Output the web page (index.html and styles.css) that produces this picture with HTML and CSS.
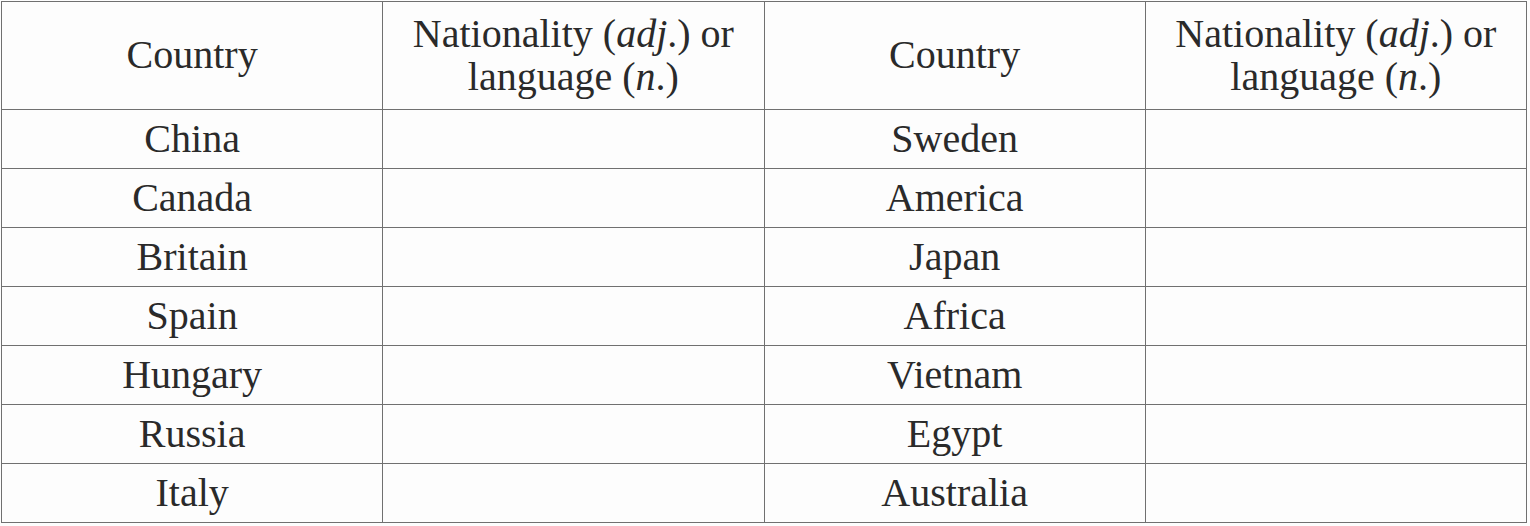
FILE: index.html
```html
<!DOCTYPE html>
<html>
<head>
<meta charset="utf-8">
<link rel="stylesheet" href="styles.css">
</head>
<body>
<table class="vocab">
  <colgroup><col class="c"><col class="c"><col class="c"><col class="c"></colgroup>
  <thead>
    <tr class="head">
      <th>Country</th>
      <th>Nationality (<i>adj</i>.) or<br>language (<i>n</i>.)</th>
      <th>Country</th>
      <th>Nationality (<i>adj</i>.) or<br>language (<i>n</i>.)</th>
    </tr>
  </thead>
  <tbody>
    <tr><td>China</td><td></td><td>Sweden</td><td></td></tr>
    <tr><td>Canada</td><td></td><td>America</td><td></td></tr>
    <tr><td>Britain</td><td></td><td>Japan</td><td></td></tr>
    <tr><td>Spain</td><td></td><td>Africa</td><td></td></tr>
    <tr><td>Hungary</td><td></td><td>Vietnam</td><td></td></tr>
    <tr><td>Russia</td><td></td><td>Egypt</td><td></td></tr>
    <tr><td>Italy</td><td></td><td>Australia</td><td></td></tr>
  </tbody>
</table>
</body>
</html>
```
FILE: styles.css
```css
html, body {
  margin: 0;
  padding: 0;
  background: #fdfdfd;
}
body {
  padding: 1px 0 0 1px;
}
.vocab {
  border-collapse: collapse;
  table-layout: fixed;
  width: 1526px;
  font-family: "Liberation Serif", "Times New Roman", serif;
  font-size: 40px;
  color: #2a2a2a;
}
.vocab .c {
  width: 25%;
}
.vocab th,
.vocab td {
  border: 1px solid #707070;
  text-align: center;
  vertical-align: middle;
  padding: 0;
  font-weight: normal;
}
.vocab th {
  height: 105px;
  line-height: 43px;
  padding-bottom: 2px;
}
.vocab td {
  height: 58px;
  line-height: 44px;
}
.vocab i {
  font-style: italic;
}
```
